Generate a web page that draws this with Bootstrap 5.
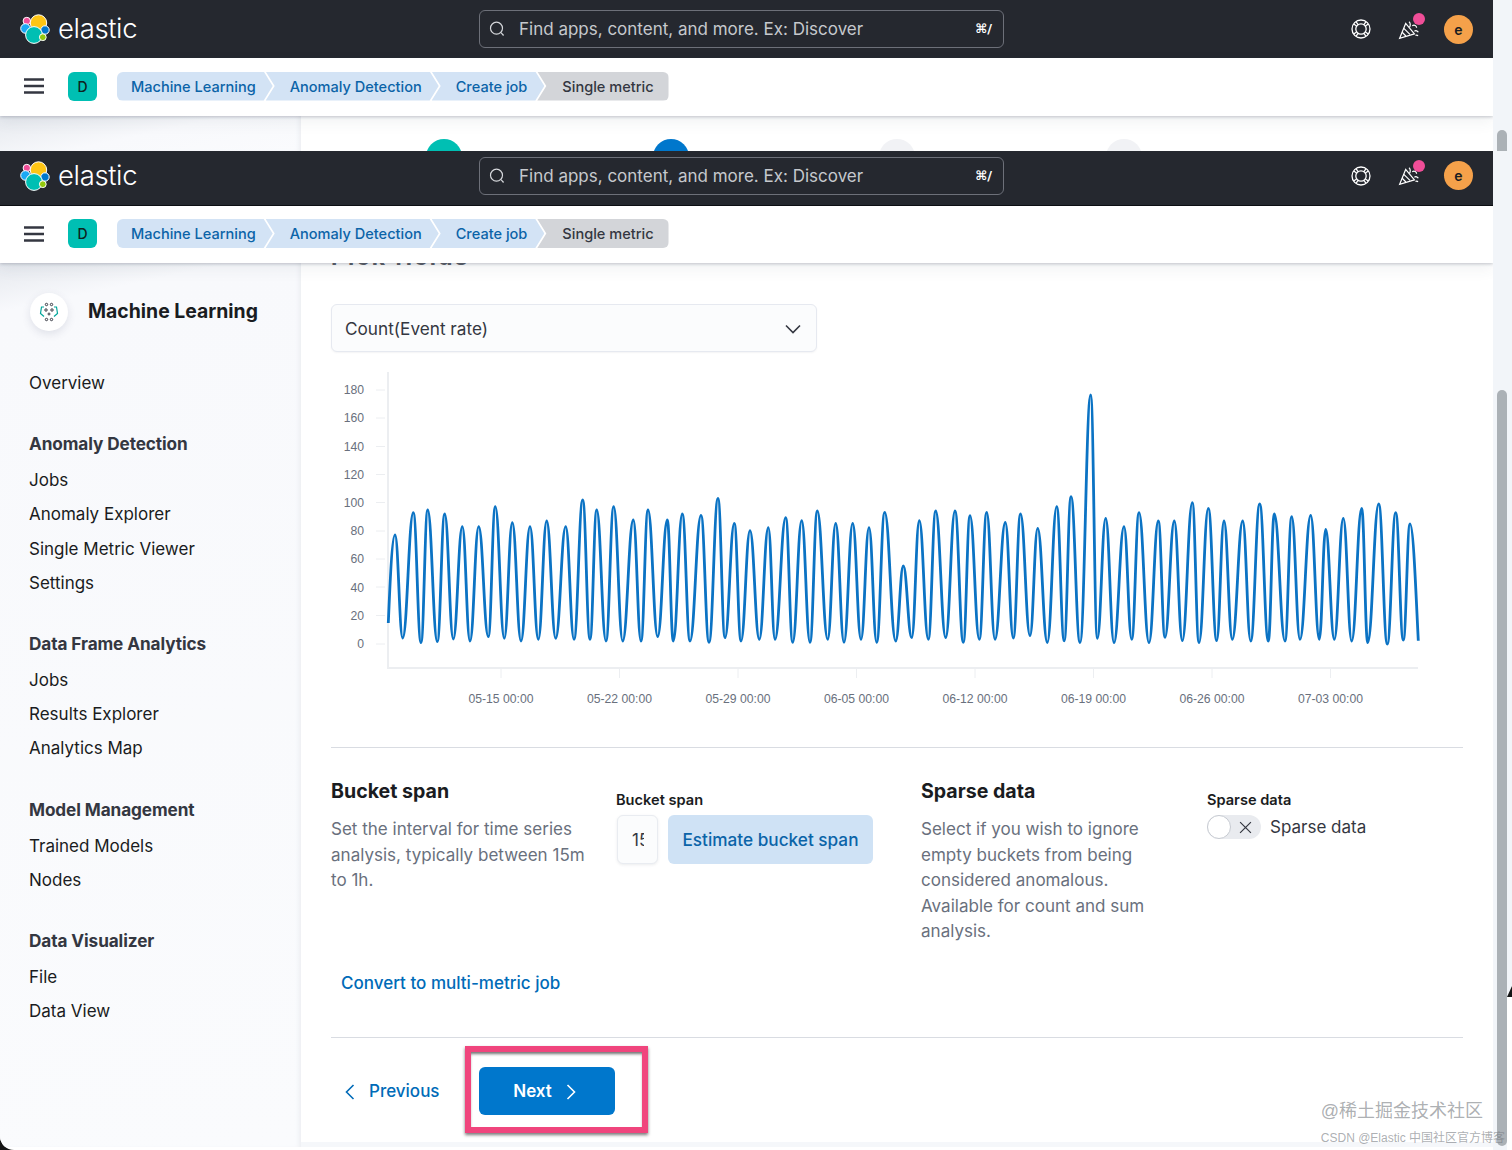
<!doctype html>
<html lang="en">
<head>
<meta charset="utf-8">
<title>Single metric</title>
<link href="https://cdn.jsdelivr.net/npm/bootstrap@5.3.0/dist/css/bootstrap.min.css" rel="stylesheet">
<style>
html,body{height:1150px;overflow:hidden}
body{font-family:Inter,"Liberation Sans",sans-serif;color:#343741;background:#fff;position:relative}
.page-wrap{width:1512px;height:1150px}
.stack-col{width:1493px;height:1150px;background:#141414}
.shot-top{height:151px;overflow:hidden;background:#fff}
.shot-low{height:999px;background:#fff;border-bottom-left-radius:14px;overflow:hidden}
.top-dark{background:#25282f;height:58px;padding:0 20px}
.top-dark.is-short{height:55px;padding-bottom:5px;border-bottom:1px solid #0c0d10}
.logo-box{width:459px}
.logo-word{font-size:27.5px;font-weight:300;color:#fff;letter-spacing:-.35px;line-height:1;margin-left:8px}
.find-box{width:525px;height:38px;border:1px solid #6d7079;border-radius:6px;color:#c6c8cd;font-size:17px;padding:0 11px 0 9px}
.find-text{margin-left:14px;padding-top:2px}
.find-key{font-size:13px;font-weight:700;color:#fff;font-family:"DejaVu Sans",sans-serif}
.top-icons{margin-left:auto;gap:20px}
.icon-slot{width:29px;height:29px}
.hot-dot{width:12px;height:12px;border-radius:50%;background:#f04e98;right:-.5px;top:-1.5px}
.user-dot{width:29px;height:29px;border-radius:50%;background:#f5a14a;color:#1a1c21;font-size:14px;font-weight:600}
.crumb-bar{height:58px;background:#fff;padding:0 0 2px 24px;box-shadow:0 1px 3px rgba(60,70,90,.28),0 6px 14px rgba(60,70,90,.07);position:relative;z-index:2}
.crumb-bar.is-short{height:57px}
.menu-glyph{width:20px;height:16px}
.space-tile{width:29px;height:29px;border-radius:6px;background:#00bfb3;color:#0e2220;font-size:14px;font-weight:500;margin:0 20px 0 24px}
.crumb-part{height:29px;line-height:30px;font-size:14.55px;font-weight:500;background:#d3e3f5;color:#0b64a8;padding:0 17px 0 24px;margin-left:-7px;clip-path:polygon(0 0,calc(100% - 9px) 0,100% 50%,calc(100% - 9px) 100%,0 100%,9px 50%)}
.crumb-part.is-first{margin-left:0;padding-left:14px;border-radius:6px 0 0 6px;clip-path:polygon(0 0,calc(100% - 9px) 0,100% 50%,calc(100% - 9px) 100%,0 100%)}
.crumb-part.is-last{background:#d3d5d9;color:#343741;padding-right:15px;padding-left:25px;border-radius:0 6px 6px 0;clip-path:polygon(0 0,100% 0,100% 100%,0 100%,9px 50%)}
.side-col{width:301px;flex:none;background:linear-gradient(168deg,#e6e9ef 0,#eff1f5 24px,#f8f9fc 48px,#fafbfd 100%);box-shadow:inset -4px 0 4px -2px #eceef2;padding-left:29px}
.body-row{height:calc(100% - 115px)}
.strip-row{height:35px}
.strip-main{padding:23px 0 0 125px;gap:190.7px}
.step-dot{width:36px;height:36px;border-radius:50%;flex:none;background:#f1f2f5}
.step-dot.is-done{background:#00bfb3}
.step-dot.is-now{background:#0077cc}
.ml-head{padding-top:30px;height:68px;margin-bottom:35px}
.ml-round{width:38px;height:38px;border-radius:50%;background:#fff;box-shadow:0 3px 8px rgba(70,80,110,.14);margin:0 20px 0 1px}
.ml-title{font-size:19.4px;font-weight:700;color:#1a1c21;line-height:28px;margin-top:4px}
.side-link{display:block;height:34.1px;line-height:34px;font-size:17px;color:#1a1c21}
.side-group{font-size:17.2px;font-weight:700;color:#343741;height:34px;line-height:34px;margin:27.3px 0 2px;letter-spacing:-.1px}
.main-col{padding:0 30px;background:linear-gradient(#fff calc(100% - 5px),#f5f7fa 0)}
.cut-title{font-size:23px;font-weight:700;line-height:24px;height:24px;margin:-18px 0 35px;letter-spacing:2px;color:#5a5e67}
.metric-pick{width:486px;height:48px;border:1px solid #e6e9f0;border-radius:6px;background:#fbfcfd;font-size:17.2px;padding:2px 15px 0 13px;box-shadow:0 1px 2px rgba(60,70,90,.06)}
.chart-svg{display:block;margin-top:18px;width:1132px;height:350px}
.chart-svg text{font-family:"Liberation Sans",Arial,sans-serif;font-size:12.2px;fill:#69707d}
.soft-rule{height:1px;background:#d9dce2;margin:0;opacity:1;border:0}
.rule-one{margin-top:27px}
.opt-grid{display:grid;grid-template-columns:285px 305px 286px 1fr;margin-top:29px}
.opt-title{font-size:19.6px;font-weight:700;color:#1a1c21;line-height:28px;margin:0 0 11px}
.opt-text{font-size:17.05px;line-height:25.5px;color:#69707d;margin:0}
.ctl-col{padding-top:13px}
.ctl-label{font-size:14.6px;font-weight:600;color:#1a1c21;line-height:20px;margin-bottom:5px}
.span-input{width:41px;height:49px;margin-left:1px;padding:0 13px 0 14px;border:1px solid #e9ecf1;border-radius:6px;background:#fbfcfd;font-size:17px;color:#343741;box-shadow:0 1px 3px rgba(60,70,90,.1);flex:none}
.span-input:focus{box-shadow:none;border-color:#e9ecf1;background:#fbfcfd}
.est-btn{height:49px;width:205px;margin-left:10px;background:#cfe2f5;border:0;border-radius:6px;color:#0b64a8;font-size:17.2px;font-weight:500;padding:0}
.est-btn:hover{background:#cfe2f5;color:#0b64a8}
.opt-col-3{width:235px}
.opt-col-1{width:262px}
.sw-track{width:54px;height:24px;border-radius:12px;background:#e9ebef;flex:none}
.sw-knob{width:24px;height:24px;border-radius:50%;background:#fff;border:1.5px solid #c6cad1;flex:none}
.sw-x{margin-left:8px}
.sw-label{font-size:17px;margin-left:9px;color:#343741;line-height:24px}
.conv-link{display:block;font-size:17.05px;font-weight:500;color:#006bb8;line-height:24px;margin:27.5px 0 42px 10px;text-decoration:none}
.foot-row{margin-top:8px}
.prev-link{width:134px;color:#006bb8;font-size:17px;font-weight:500;padding:5px 0 0 14px;gap:14px;text-decoration:none}
.pink-frame{width:183px;height:87px;border:6px solid #f0457d;padding:15px 0 0 8px;box-shadow:0 2px 3px rgba(30,30,30,.6),inset 0 3px 3px -1px rgba(40,40,40,.65)}
.next-btn{width:136px;height:48px;background:#0077cc;border:0;border-radius:6px;color:#fff;font-size:17px;font-weight:600;gap:14px;padding:2px 5px 0 0}
.next-btn:hover{background:#0077cc;color:#fff}
.gutter-col{width:19px;height:1150px;flex:none;background:linear-gradient(90deg,#f2f5f9 14px,transparent 0),linear-gradient(#f2f5f9 997px,#fff 0)}
.bar-thumb{width:10px;margin-left:4px;background:#abb1b6;border-radius:5px 5px 0 0}
.bar-a{height:21px;margin-top:130px}
.bar-b{height:756px;margin-top:239px;border-radius:5px}
.edge-nick{left:1507px;top:986px;width:5px;height:11px;background:#141414;border-top-left-radius:5px;clip-path:polygon(100% 0,100% 100%,0 100%)}
.mark-big{right:29px;top:1099px;font-size:18px;line-height:24px;color:rgba(120,124,130,.62);font-family:"Liberation Sans","Noto Sans CJK SC",sans-serif}
.mark-small{right:7px;top:1130px;font-size:12px;line-height:16px;color:rgba(120,124,130,.62);font-family:"Liberation Sans","Noto Sans CJK SC",sans-serif}
</style>
</head>
<body>
<div class="page-wrap d-flex">
  <div class="stack-col">
    <div class="shot-top">
      <header class="top-dark d-flex align-items-center">
        <div class="logo-box d-flex align-items-center">
          <svg width="30" height="30" viewBox="0 0 30 30" aria-hidden="true"><g stroke="#fff" stroke-width="1"><circle cx="18.500" cy="9" r="8.200" fill="#fec514"/><circle cx="6.800" cy="7" r="3.700" fill="#f04e98"/><circle cx="5.500" cy="14.500" r="4.800" fill="#1ba9f5"/><circle cx="25" cy="16" r="4.200" fill="#0077cc"/><circle cx="14" cy="21" r="8.400" fill="#00bfb3"/><circle cx="22.800" cy="23.200" r="3.400" fill="#93c90e"/></g></svg>
          <span class="logo-word">elastic</span>
        </div>
        <div class="find-box d-flex align-items-center">
          <svg width="16" height="16" viewBox="0 0 16 16" fill="none" stroke="#d5d7db" stroke-width="1.200" aria-hidden="true"><circle cx="7.500" cy="7.200" r="6"/><path d="M12 11.600l2.600 2.900"/></svg>
          <span class="find-text">Find apps, content, and more. Ex: Discover</span>
          <span class="find-key ms-auto">⌘/</span>
        </div>
        <div class="top-icons d-flex align-items-center">
          <div class="icon-slot d-flex align-items-center justify-content-center">
            <svg width="20" height="20" viewBox="0 0 20 20" fill="none" stroke="#fff" stroke-width="1.300" aria-hidden="true"><circle cx="10" cy="10" r="9"/><circle cx="10" cy="10" r="5.200"/><path d="M5 2.700l2 2.900M2.700 5l2.900 2M15 2.700l-2 2.900M17.300 5l-2.900 2M5 17.300l2-2.900M2.700 15l2.900-2M15 17.300l-2-2.900M17.300 15l-2.900-2"/></svg>
          </div>
          <div class="icon-slot position-relative d-flex align-items-center justify-content-center">
            <svg width="23" height="23" viewBox="0 0 21 21" fill="none" stroke="#fff" stroke-width="1.100" aria-hidden="true"><path d="M7 5L1.500 18.500 15 14.500z"/><path d="M5.300 9.500l5.600 5.500M3.800 13l3.400 3.400M10 3.500c1.500 1 1.500 3.500.5 5M13 7c2-1 4 0 4 2M15 12c1.200-.8 3-.3 3.500 1M16 16c.8-.4 1.800-.2 2.200.5"/></svg>
            <span class="hot-dot position-absolute"></span>
          </div>
          <div class="user-dot d-flex align-items-center justify-content-center">e</div>
        </div>
      </header>
      <div class="crumb-bar d-flex align-items-center">
        <svg class="menu-glyph" viewBox="0 0 20 16" aria-hidden="true"><path d="M0 1.500h20M0 8h20M0 14.500h20" stroke="#343741" stroke-width="2.400"/></svg>
        <div class="space-tile d-flex align-items-center justify-content-center">D</div>
        <nav class="d-flex" aria-label="breadcrumb">
          <a class="crumb-part is-first text-decoration-none">Machine Learning</a>
          <a class="crumb-part text-decoration-none">Anomaly Detection</a>
          <a class="crumb-part text-decoration-none">Create job</a>
          <span class="crumb-part is-last">Single metric</span>
        </nav>
      </div>
      <div class="strip-row d-flex">
        <div class="side-col"></div>
        <div class="strip-main d-flex">
          <span class="step-dot is-done"></span><span class="step-dot is-now"></span><span class="step-dot"></span><span class="step-dot"></span>
        </div>
      </div>
    </div>

    <div class="shot-low">
      <header class="top-dark is-short d-flex align-items-center">
        <div class="logo-box d-flex align-items-center">
          <svg width="30" height="30" viewBox="0 0 30 30" aria-hidden="true"><g stroke="#fff" stroke-width="1"><circle cx="18.500" cy="9" r="8.200" fill="#fec514"/><circle cx="6.800" cy="7" r="3.700" fill="#f04e98"/><circle cx="5.500" cy="14.500" r="4.800" fill="#1ba9f5"/><circle cx="25" cy="16" r="4.200" fill="#0077cc"/><circle cx="14" cy="21" r="8.400" fill="#00bfb3"/><circle cx="22.800" cy="23.200" r="3.400" fill="#93c90e"/></g></svg>
          <span class="logo-word">elastic</span>
        </div>
        <div class="find-box d-flex align-items-center">
          <svg width="16" height="16" viewBox="0 0 16 16" fill="none" stroke="#d5d7db" stroke-width="1.200" aria-hidden="true"><circle cx="7.500" cy="7.200" r="6"/><path d="M12 11.600l2.600 2.900"/></svg>
          <span class="find-text">Find apps, content, and more. Ex: Discover</span>
          <span class="find-key ms-auto">⌘/</span>
        </div>
        <div class="top-icons d-flex align-items-center">
          <div class="icon-slot d-flex align-items-center justify-content-center">
            <svg width="20" height="20" viewBox="0 0 20 20" fill="none" stroke="#fff" stroke-width="1.300" aria-hidden="true"><circle cx="10" cy="10" r="9"/><circle cx="10" cy="10" r="5.200"/><path d="M5 2.700l2 2.900M2.700 5l2.900 2M15 2.700l-2 2.900M17.300 5l-2.900 2M5 17.300l2-2.900M2.700 15l2.900-2M15 17.300l-2-2.900M17.300 15l-2.900-2"/></svg>
          </div>
          <div class="icon-slot position-relative d-flex align-items-center justify-content-center">
            <svg width="23" height="23" viewBox="0 0 21 21" fill="none" stroke="#fff" stroke-width="1.100" aria-hidden="true"><path d="M7 5L1.500 18.500 15 14.500z"/><path d="M5.300 9.500l5.600 5.500M3.800 13l3.400 3.400M10 3.500c1.500 1 1.500 3.500.5 5M13 7c2-1 4 0 4 2M15 12c1.200-.8 3-.3 3.500 1M16 16c.8-.4 1.800-.2 2.200.5"/></svg>
            <span class="hot-dot position-absolute"></span>
          </div>
          <div class="user-dot d-flex align-items-center justify-content-center">e</div>
        </div>
      </header>
      <div class="crumb-bar is-short d-flex align-items-center">
        <svg class="menu-glyph" viewBox="0 0 20 16" aria-hidden="true"><path d="M0 1.500h20M0 8h20M0 14.500h20" stroke="#343741" stroke-width="2.400"/></svg>
        <div class="space-tile d-flex align-items-center justify-content-center">D</div>
        <nav class="d-flex" aria-label="breadcrumb">
          <a class="crumb-part is-first text-decoration-none">Machine Learning</a>
          <a class="crumb-part text-decoration-none">Anomaly Detection</a>
          <a class="crumb-part text-decoration-none">Create job</a>
          <span class="crumb-part is-last">Single metric</span>
        </nav>
      </div>
      <div class="body-row d-flex">
        <aside class="side-col">
          <div class="ml-head d-flex align-items-start">
            <div class="ml-round d-flex align-items-center justify-content-center">
              <svg width="20" height="20" viewBox="0 0 20 20" aria-hidden="true"><g fill="none" stroke="#343741" stroke-width="1"><circle cx="7.500" cy="2.500" r="1.200"/><circle cx="12.500" cy="2.500" r="1.200"/><circle cx="7" cy="8" r="1.200"/><circle cx="13" cy="8" r="1.200"/><circle cx="10" cy="12" r="1"/><circle cx="7.500" cy="17.500" r="1.200"/><circle cx="12.500" cy="17.500" r="1.200"/></g><path d="M5 5H2.500L1.500 11.500 5 14.500M15 5h2.500l1 6.500-3.500 3" fill="none" stroke="#00a69b" stroke-width="1.200"/></svg>
            </div>
            <div class="ml-title">Machine Learning</div>
          </div>
          <a class="side-link text-decoration-none">Overview</a>
          <div class="side-group">Anomaly Detection</div>
          <a class="side-link text-decoration-none">Jobs</a>
          <a class="side-link text-decoration-none">Anomaly Explorer</a>
          <a class="side-link text-decoration-none">Single Metric Viewer</a>
          <a class="side-link text-decoration-none">Settings</a>
          <div class="side-group">Data Frame Analytics</div>
          <a class="side-link text-decoration-none">Jobs</a>
          <a class="side-link text-decoration-none">Results Explorer</a>
          <a class="side-link text-decoration-none">Analytics Map</a>
          <div class="side-group">Model Management</div>
          <a class="side-link text-decoration-none">Trained Models</a>
          <a class="side-link text-decoration-none">Nodes</a>
          <div class="side-group">Data Visualizer</div>
          <a class="side-link text-decoration-none">File</a>
          <a class="side-link text-decoration-none">Data View</a>
        </aside>
        <main class="main-col flex-grow-1">
          <div class="cut-title">Pick fields</div>
          <div class="metric-pick d-flex align-items-center justify-content-between">
            <span>Count(Event rate)</span>
            <svg width="16" height="10" viewBox="0 0 16 10" fill="none" stroke="#343741" stroke-width="1.600" aria-hidden="true"><path d="M1 1.500l7 7 7-7"/></svg>
          </div>
          <svg class="chart-svg" viewBox="331 370 1132 350" role="img" aria-label="Event rate over time">
            <g stroke="#eceef1" fill="none">
              <path d="M388 372V669M387 668H1418" stroke-width="2"/>
              <path d="M376 390h9M376 418h9M376 446.500h9M376 474.500h9M376 502.500h9M376 531h9M376 559h9M376 587h9M376 615.500h9M376 644h9" stroke-width="1"/>
              <path d="M501 669v9M619.500 669v9M738 669v9M856.500 669v9M975 669v9M1093.500 669v9M1212 669v9M1330.500 669v9" stroke-width="1"/>
            </g>
            <g text-anchor="end">
              <text x="364" y="394">180</text><text x="364" y="422">160</text><text x="364" y="450.500">140</text><text x="364" y="478.500">120</text><text x="364" y="507">100</text><text x="364" y="535">80</text><text x="364" y="563">60</text><text x="364" y="591.500">40</text><text x="364" y="619.500">20</text><text x="364" y="648">0</text>
            </g>
            <g text-anchor="middle">
              <text x="501" y="703">05-15 00:00</text><text x="619.500" y="703">05-22 00:00</text><text x="738" y="703">05-29 00:00</text><text x="856.500" y="703">06-05 00:00</text><text x="975" y="703">06-12 00:00</text><text x="1093.500" y="703">06-19 00:00</text><text x="1212" y="703">06-26 00:00</text><text x="1330.500" y="703">07-03 00:00</text>
            </g>
            <path id="rate-line" fill="none" stroke="#0b73c4" stroke-width="2.800" stroke-linejoin="round"/>
          </svg>
          <hr class="soft-rule rule-one">
          <div class="opt-grid">
            <div class="opt-col-1">
              <h3 class="opt-title">Bucket span</h3>
              <p class="opt-text">Set the interval for time series analysis, typically between 15m to 1h.</p>
            </div>
            <div class="ctl-col">
              <div class="ctl-label">Bucket span</div>
              <div class="d-flex">
                <input class="form-control span-input" value="15m" aria-label="Bucket span">
                <button class="btn est-btn" type="button">Estimate bucket span</button>
              </div>
            </div>
            <div class="opt-col-3">
              <h3 class="opt-title">Sparse data</h3>
              <p class="opt-text">Select if you wish to ignore empty buckets from being considered anomalous. Available for count and sum analysis.</p>
            </div>
            <div class="ctl-col">
              <div class="ctl-label">Sparse data</div>
              <div class="d-flex align-items-center">
                <span class="sw-track d-flex align-items-center">
                  <span class="sw-knob"></span>
                  <svg class="sw-x" width="13" height="13" viewBox="0 0 12 12" stroke="#343741" stroke-width="1.100" aria-hidden="true"><path d="M1 1l10 10M11 1L1 11"/></svg>
                </span>
                <span class="sw-label">Sparse data</span>
              </div>
            </div>
          </div>
          <a class="conv-link">Convert to multi-metric job</a>
          <hr class="soft-rule">
          <div class="foot-row d-flex align-items-center">
            <a class="prev-link d-flex align-items-center">
              <svg width="10" height="16" viewBox="0 0 10 16" fill="none" stroke="#006bb8" stroke-width="1.600" aria-hidden="true"><path d="M8.500 1L1.500 8l7 7"/></svg>
              <span>Previous</span>
            </a>
            <div class="pink-frame">
              <button class="btn next-btn d-flex align-items-center justify-content-center" type="button">
                <span>Next</span>
                <svg width="10" height="16" viewBox="0 0 10 16" fill="none" stroke="#fff" stroke-width="1.600" aria-hidden="true"><path d="M1.500 1l7 7-7 7"/></svg>
              </button>
            </div>
          </div>
        </main>
      </div>
    </div>
  </div>
  <div class="gutter-col d-flex flex-column">
    <div class="bar-thumb bar-a"></div>
    <div class="bar-thumb bar-b"></div>
  </div>
</div>
<span class="edge-nick position-absolute"></span>
<div class="mark-big position-absolute">@稀土掘金技术社区</div>
<div class="mark-small position-absolute">CSDN @Elastic 中国社区官方博客</div>
<script>
var pts=[388.3,623,395,535,402.7,638,413.3,512.7,421,642.7,427.7,510,437.3,641.7,444.7,514,453.3,639,462.3,526.7,470,641,478.7,526.7,488.3,636.7,495.3,506.7,504.3,638.3,512.3,522.7,521,641,530,526.7,538.3,639.3,546.7,521,555.7,638.3,565.7,526.7,574,639.3,582.7,500,590,639.3,596.7,510,606,641,613.7,506.7,622.7,641,633.3,520,641,641,648,510,657.7,636.7,667.3,520,673.3,641,682.3,514,690,641,701,515.3,709,642.3,718,498.3,725,637.7,734.3,523.3,741,641,750,530.7,759.3,639.3,768.3,527.7,775,639.3,785.7,517.7,792.7,642.3,801.7,520.7,810,642.3,817.3,511,827.7,639.3,835.7,523.3,844,642.3,852.7,523.3,861,639.3,869,527.7,876.7,642.3,884.7,512.3,895.7,641,903.3,566,911.7,637.7,919.3,520.7,928.3,639.3,935.7,511,945.7,637.7,955,511,963.3,642.3,970,515.7,979.3,639.3,986.7,512.3,995,639.3,1005.3,522.5,1013.3,638,1020.5,513.8,1030,635.7,1037.7,528.3,1047.3,642.5,1056.7,506.7,1064.2,640.8,1071,496.7,1080,642.5,1090.7,395,1097.3,638.3,1105.7,518.3,1114,642.7,1124,526.7,1131.7,639.3,1139,512.7,1149,642.7,1158.3,521,1165,637.3,1174.3,521,1182.3,640.7,1192.3,502.7,1199,642.7,1208.3,508.3,1216.7,640.7,1224,521,1232.3,639.3,1242.7,521,1250.7,641,1259.7,504,1268.3,641,1274.3,514,1285,641,1291.7,516.7,1300,639.3,1310.7,515.3,1319.3,639.3,1325.7,529.3,1334.3,639.3,1343.3,518.3,1351.7,641,1361.7,508.3,1367.7,642.7,1378.7,504,1387.3,644,1395.7,512.7,1403.3,640,1410,524,1418.3,640.7];
var d="M"+pts[0]+" "+pts[1];
for(var i=2;i<pts.length;i+=2){
  var x0=pts[i-2],y0=pts[i-1],x1=pts[i],y1=pts[i+1],k=(x1-x0)*0.42;
  var lastEnd=i===pts.length-2, first=i===2;
  d+=" C"+(first?x0+k*.6:x0+k)+" "+(first?y0-40:y0)+" "+(lastEnd?x1-k*.6:x1-k)+" "+(lastEnd?y1-40:y1)+" "+x1+" "+y1;
}
document.getElementById("rate-line").setAttribute("d",d);
</script>
<script src="https://cdn.jsdelivr.net/npm/bootstrap@5.3.0/dist/js/bootstrap.bundle.min.js"></script>
</body>
</html>
